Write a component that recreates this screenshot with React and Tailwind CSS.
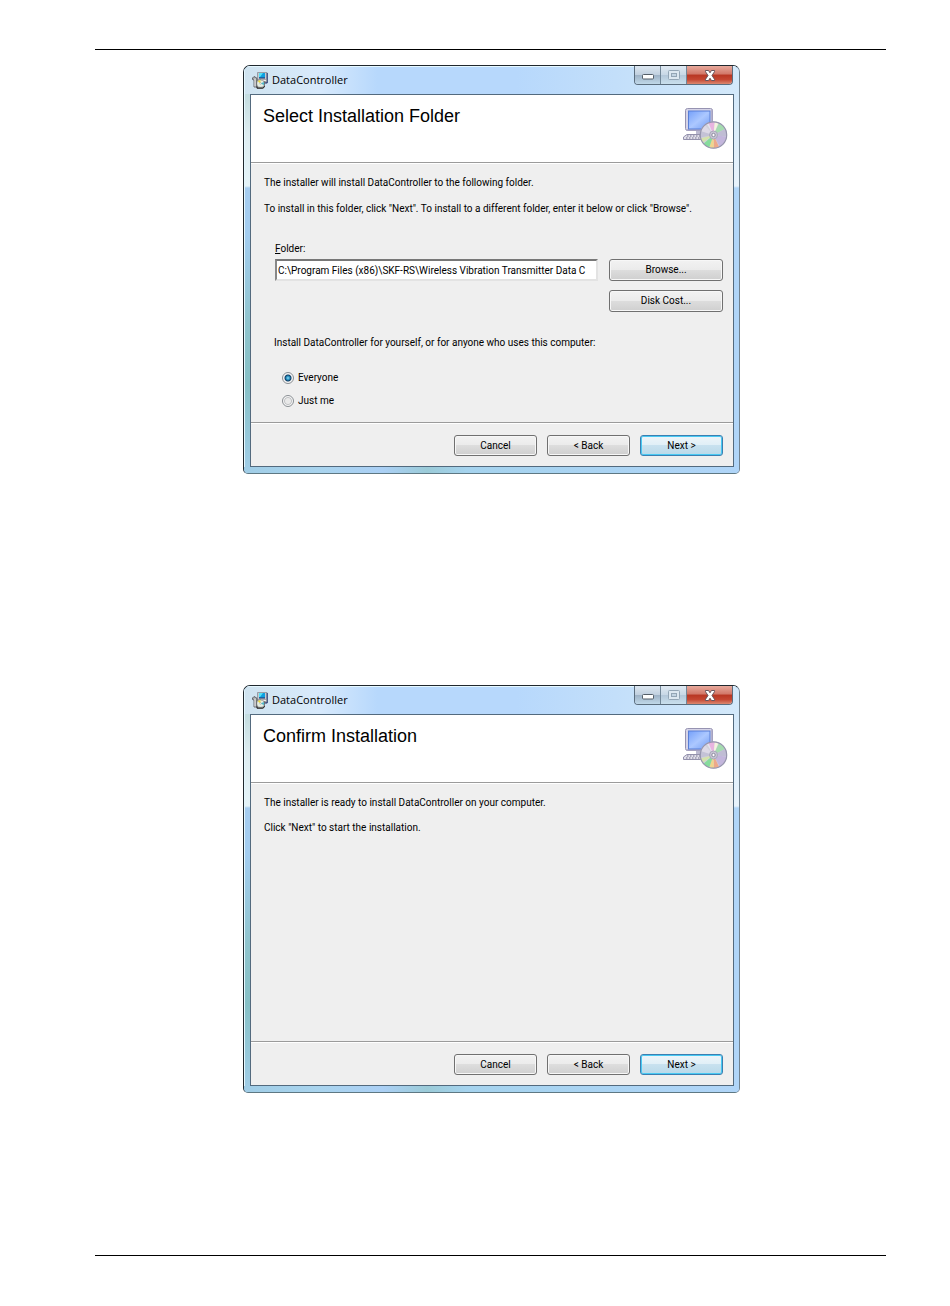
import { useState } from 'react'

const TEXT_FONT = "font-['Roboto','Liberation_Sans',Arial,sans-serif]"

export default function App() {
  const [scope, setScope] = useState('everyone')

  return (
    <div className={`min-h-screen bg-white pt-[49px] pr-16 pb-[49px] pl-[95px] text-[10px] leading-[14px] text-black ${TEXT_FONT}`}>
      <main className="flex flex-col items-center border-y border-black pt-[15px] pb-[162px] pl-[2px]">
        <InstallerWindow title="Select Installation Folder">
          <p>The installer will install DataController to the following folder.</p>
          <p className="mt-3">To install in this folder, click "Next". To install to a different folder, enter it below or click "Browse".</p>

          {/* Folder picker */}
          <div className="mt-[26px] flex items-start gap-[11px] pl-[11px]">
            <div className="min-w-0 flex-1">
              <label htmlFor="folder" className="block"><u>F</u>older:</label>
              <input
                id="folder"
                type="text"
                defaultValue="C:\Program Files (x86)\SKF-RS\Wireless Vibration Transmitter Data C"
                className="mt-[3px] block h-[22px] w-full border-2 border-t-[#777] border-r-[#e3e3e3] border-b-[#e3e3e3] border-l-[#888] bg-white px-px outline-none"
              />
            </div>
            <div className="flex shrink-0 flex-col gap-[9px] pt-[17px]">
              <WinButton wide>Browse...</WinButton>
              <WinButton wide>Disk Cost...</WinButton>
            </div>
          </div>

          {/* Install scope */}
          <fieldset className="mt-6 pl-[10px]">
            <legend>Install DataController for yourself, or for anyone who uses this computer:</legend>
            <div className="mt-[21px] flex flex-col gap-[9px] pl-2">
              <ScopeOption value="everyone" label="Everyone" scope={scope} onChange={setScope} />
              <ScopeOption value="me" label="Just me" scope={scope} onChange={setScope} />
            </div>
          </fieldset>
        </InstallerWindow>

        <div className="h-[211px]" />

        <InstallerWindow title="Confirm Installation">
          <p>The installer is ready to install DataController on your computer.</p>
          <p className="mt-[11px]">Click "Next" to start the installation.</p>
        </InstallerWindow>
      </main>
    </div>
  )
}

function InstallerWindow({ title, children }) {
  return (
    <section className="flex w-full max-w-[497px] flex-col overflow-hidden rounded-t-[7px] rounded-b-[5px] border border-[#20282e] border-r-[#71828f] border-b-[#5e7883] bg-[#b0d5f8]">
      {/* Title bar */}
      <header className="flex h-7 items-start bg-[linear-gradient(to_right,#cfe3ef,#d8eafc_15%,#b7d8fc_27%,#b7d8fc_55%,#c3dffa_75%,#d4e9fa)] pl-2 shadow-[inset_1px_1px_0_#e6f8ff]">
        <div className="flex h-7 flex-1 items-center gap-1">
          <SetupIcon />
          <span className="font-['Open_Sans','Noto_Sans',sans-serif] text-[11px] leading-4">DataController</span>
        </div>
        <div className="mr-[6px] flex h-[19px] overflow-hidden rounded-b-[4px] border border-t-0 border-[#5b6d7e]">
          <button type="button" aria-label="Minimize" className="flex w-[26px] items-center justify-center border-r border-[#718697] bg-[linear-gradient(to_bottom,#dce7f1_0%,#c1d0df_48%,#9db1c5_50%,#c0d8e9)]">
            <svg className="mt-1" width="12" height="6" viewBox="0 0 12 6"><rect x=".5" y=".5" width="11" height="4.5" rx="1" fill="#fff" stroke="#555f69" /></svg>
          </button>
          <button type="button" aria-label="Maximize" disabled className="flex w-[26px] items-center justify-center border-r border-[#718697] bg-[linear-gradient(to_bottom,#dfe9f2_0%,#c8d8e6_48%,#b3c7d9_50%,#c9dfed)]">
            <svg width="12" height="10" viewBox="0 0 12 10"><rect x=".5" y=".5" width="11" height="9" rx="1" fill="#dce8f1" stroke="#93a6b6" /><rect x="3.5" y="3.5" width="5" height="3" fill="#c3d5e3" stroke="#93a6b6" /></svg>
          </button>
          <button type="button" aria-label="Close" className="flex w-[45px] items-center justify-center bg-[linear-gradient(to_bottom,#e7a99c_0%,#d17768_45%,#b83623_50%,#c44632_75%,#dc8870)]">
            <svg width="12" height="11" viewBox="0 0 12 11"><path d="M1.500.5H4.500L6 2.800 7.500.5h3v1.200L8 5.500l2.500 3.800v1.200h-3L6 8.200l-1.500 2.300h-3V9.300L4 5.500 1.500 1.700z" fill="#fff" stroke="#5a4b55" strokeWidth=".9" /></svg>
          </button>
        </div>
      </header>

      {/* Glass frame on both sides of the client area */}
      <div className="flex">
        <div className="w-[6px] shrink-0 border-l border-[#e6f8ff] bg-[linear-gradient(to_bottom,#c3dcdf_0px,#deedf1_40px,#e4f3f8_92px,#a6cdf0_94px,#a3cdf0_140px,#8fc4cd_230px,#86c0c6_290px,#a0cde6)]" />
        <div className="min-w-0 flex-1 border border-[#536a7e] bg-[#efefef]">
          {/* Banner */}
          <div className="flex h-[68px] items-start justify-between border-b border-[#9b9b9b] bg-white pt-3 pr-[5px] pl-3">
            <h1 className="font-['Liberation_Sans',Arial,sans-serif] text-[18px] leading-[18px]">{title}</h1>
            <ComputerDiscIcon />
          </div>

          <div className="min-h-[258px] border-t border-white pt-3 pr-[10px] pb-[14px] pl-[13px]">{children}</div>

          {/* Wizard buttons */}
          <footer className="border-t border-[#9b9b9b]">
            <div className="flex justify-end gap-[10px] border-t border-white pt-[11px] pr-[10px] pb-[10px]">
              <WinButton>Cancel</WinButton>
              <WinButton>{'< Back'}</WinButton>
              <WinButton primary>{'Next >'}</WinButton>
            </div>
          </footer>
        </div>
        <div className="w-[5px] shrink-0 bg-[linear-gradient(to_bottom,#d4e9fa_0px,#e8f3fc_92px,#b0d5f8_94px,#b0d5f8)]" />
      </div>
      <div className="h-[6px] bg-[linear-gradient(to_right,#a0cde6,#a9d4ee_15%,#abd0f5_28%,#9bcbd8_37%,#a5d3ee_45%,#b0d5f8)]" />
    </section>
  )
}

function WinButton({ children, primary, wide }) {
  return (
    <button
      type="button"
      className={`rounded-[3px] border text-center ${wide ? 'h-[22px] w-[114px]' : 'h-[21px] w-[83px]'} ${
        primary
          ? 'border-[#3c7fb1] bg-[linear-gradient(to_bottom,#eef5f9_0%,#e0eff7_48%,#c8e1ef_50%,#b9d9e9)] shadow-[inset_0_0_0_1px_#48c9f3]'
          : 'border-[#707070] bg-[linear-gradient(to_bottom,#f2f2f2_0%,#ebebeb_48%,#dddddd_50%,#cfcfcf)] shadow-[inset_0_0_0_1px_#f7f7f7]'
      }`}
    >
      {children}
    </button>
  )
}

function ScopeOption({ value, label, scope, onChange }) {
  return (
    <label className="flex items-center gap-1">
      <input
        type="radio"
        name="scope"
        value={value}
        checked={scope === value}
        onChange={() => onChange(value)}
        className="size-3 appearance-none rounded-full border border-[#8a8f94] bg-[radial-gradient(circle,#e9e9e9_35%,#c3c5c7_50%,#f6f6f6_62%)] checked:bg-[radial-gradient(circle,#8fe0fa_0px,#1d83b5_2px,#133d63_3px,#f4f4f4_4px)]"
      />
      <span>{label}</span>
    </label>
  )
}

function SetupIcon() {
  return (
    <svg width="16" height="17" viewBox="0 0 16 17" aria-hidden="true">
      <path d="M5.500.5H15v10H5.500z" fill="#c7c9cf" stroke="#8a8e96" strokeWidth=".8" />
      <path d="M7 1h6v5H7z" fill="#0e9fe0" />
      <path d="M7 1h4L8 5H7z" fill="#56e0f3" />
      <path d="M13 6H7M15.200 1v10H12" fill="none" stroke="#1c2d6a" />
      <path d="M8 7.500h6.500v2H8z" fill="#eee" stroke="#777" strokeWidth=".5" />
      <path d="M.5 6 2 4.500 4.800 6V15H2V8L.5 7.500z" fill="#a7a9ab" stroke="#4e5055" strokeWidth=".8" />
      <path d="M3 6.500v8" stroke="#eee" />
      <path d="M5 8h3l4.500 1.500v5l-2 2H5z" fill="#b5bab8" stroke="#666" strokeWidth=".8" />
      <circle cx="8.500" cy="11.500" r="3.300" fill="#e6eee2" />
      <path d="m8.500 11.500-3-2.500 3-1z" fill="#e8d841" />
      <path d="m8.500 11.500 3.400-1.500.1 3z" fill="#48b6c7" />
      <path d="M5 14.500v1.500h6.500l1-2" fill="none" stroke="#222" />
      <circle cx="8.500" cy="11.500" r=".8" fill="#fff" stroke="#888" strokeWidth=".4" />
    </svg>
  )
}

function ComputerDiscIcon() {
  return (
    <svg width="45" height="43" viewBox="0 0 45 43" aria-hidden="true">
      <defs>
        <linearGradient id="screen" x1="0" y1="0" x2="1" y2="1">
          <stop stopColor="#75a0fa" />
          <stop offset=".5" stopColor="#acc8ff" />
          <stop offset="1" stopColor="#719bf4" />
        </linearGradient>
        <clipPath id="disc"><circle cx="30.500" cy="28" r="13" /></clipPath>
      </defs>
      {/* Monitor and keyboard */}
      <rect x="2.500" y="1.500" width="27" height="22" rx="2" fill="#d6d4e7" stroke="#9693b2" />
      <path d="M29 3v20H4" fill="none" stroke="#aaa7c5" strokeWidth="1.500" />
      <rect x="5.500" y="4" width="21.500" height="18" fill="url(#screen)" stroke="#587ed7" />
      <path d="M13 24h10v3H13z" fill="#bbb9d0" />
      <path d="M4 27.500h22l3 5H.500V30z" fill="#e0deea" stroke="#9391ac" />
      <path d="M4 29h22M3 31h24" stroke="#777690" strokeWidth="1.200" strokeDasharray="1.500 1.500" />
      {/* Disc */}
      <circle cx="30.500" cy="28" r="13.500" fill="#d1d1dc" />
      <g clipPath="url(#disc)">
        <path d="M30.500 28 21 12h5z" fill="#e5e4ee" />
        <path d="M30.500 28 24 12h8z" fill="#e8b4df" />
        <path d="M30.500 28 32 12h5z" fill="#f5f4de" />
        <path d="M30.500 28 38 12l6 9z" fill="#a5dcb0" />
        <path d="M30.500 28 46 20v10z" fill="#c0bdd4" />
        <path d="M30.500 28 46 30l-8 12z" fill="#c3b6dc" />
        <path d="M30.500 28 38 44h-7z" fill="#eda98a" />
        <path d="M30.500 28 31 44h-6z" fill="#f0d58e" />
        <path d="M30.500 28 25 44l-6-6z" fill="#86dc9c" />
        <path d="M30.500 28 15 39v-7z" fill="#d5e2ac" />
        <path d="M30.500 28 15 31v-8z" fill="#c4c2d6" />
        <path d="M30.500 28 15 23l5-7z" fill="#ddd9e7" />
      </g>
      <circle cx="30.500" cy="28" r="13.200" fill="none" stroke="#9695ad" strokeWidth="1.200" />
      <circle cx="30.500" cy="28" r="4" fill="#c8c6d5" stroke="#aaa8bb" />
      <circle cx="30.500" cy="28" r="1.700" fill="#fff" stroke="#8b899e" />
    </svg>
  )
}
